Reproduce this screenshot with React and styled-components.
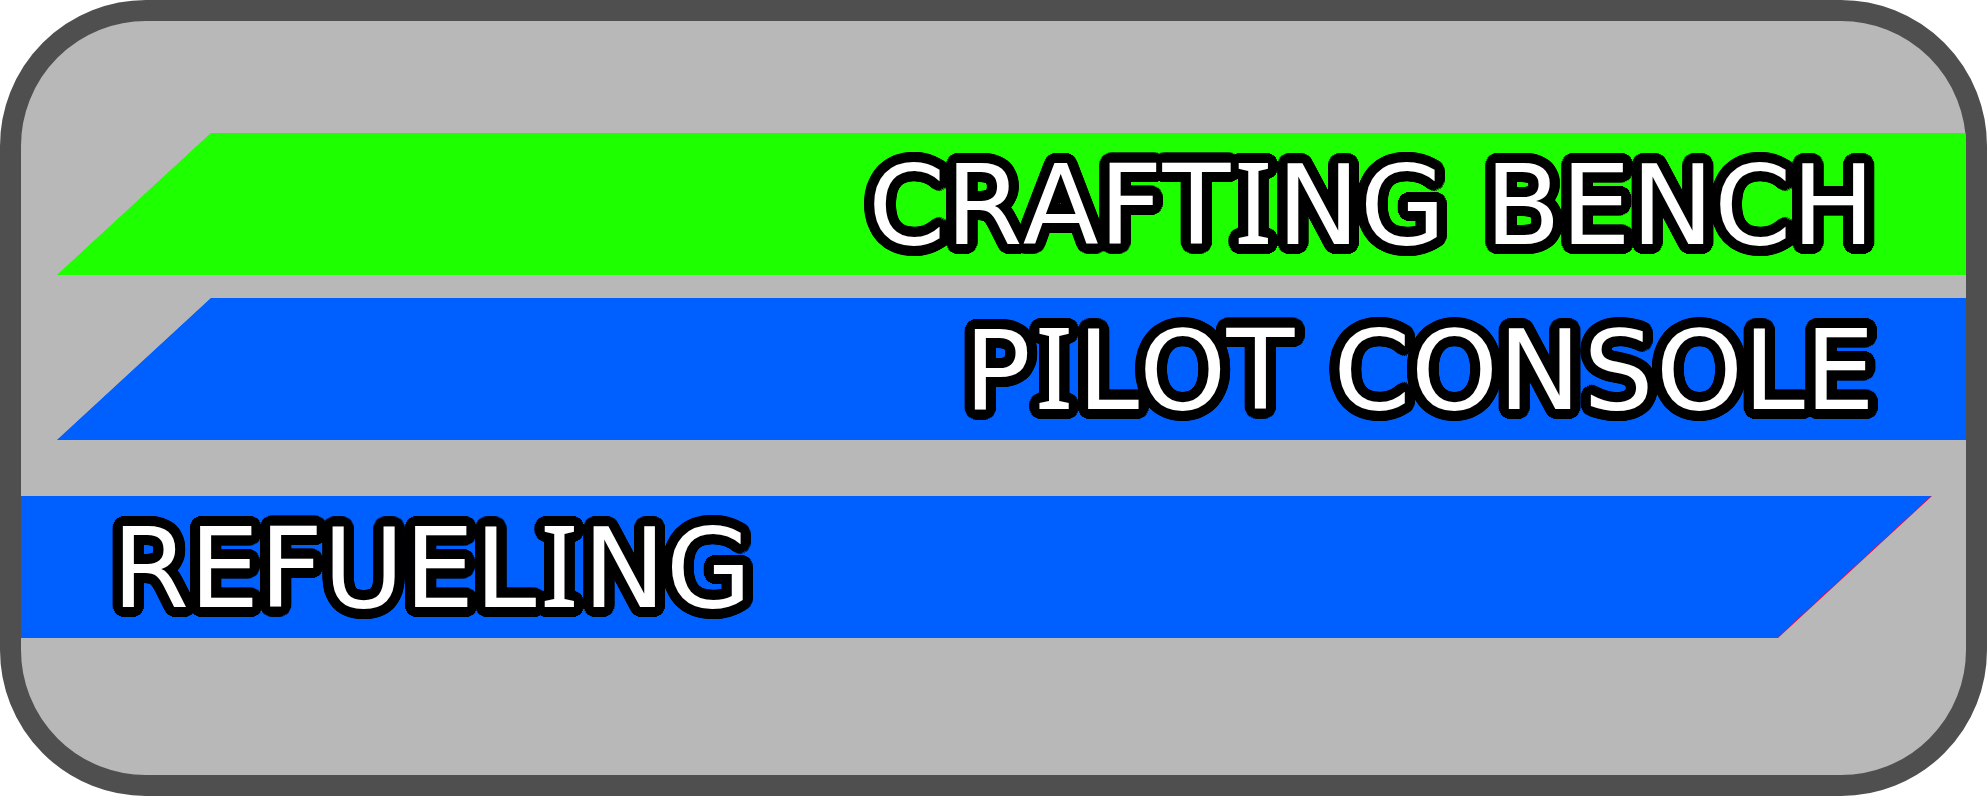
import React from 'react';
import styled, { createGlobalStyle } from 'styled-components';

const GlobalStyle = createGlobalStyle`
  * { box-sizing: border-box; }
  body { margin: 0; background: #fff; }
`;

const Panel = styled.main`
  display: flex;
  flex-direction: column;
  min-height: 100vh;
  padding: 112px 0;
  border: 21px solid #4f4f4f;
  border-radius: 146px;
  background: #b8b8b8;
  overflow: hidden;
`;

const slant = (side, inset) =>
  side === 'right'
    ? `polygon(${154 + inset}px 0, 100% 0, 100% 100%, ${inset}px 100%)`
    : `polygon(0 0, calc(100% - ${inset}px) 0, calc(100% - ${154 + inset}px) 100%, 0 100%)`;

const Banner = styled.section`
  position: relative;
  isolation: isolate;
  display: flex;
  justify-content: ${(p) => (p.$side === 'right' ? 'flex-end' : 'flex-start')};
  height: 142px;
  margin: ${(p) =>
    p.$side === 'right' ? `${p.$gap}px 0 0 36px` : `${p.$gap}px 34px 0 0`};
  padding: 2px 91px 0;
  background: ${(p) => p.$edge || p.$color};
  clip-path: ${(p) => slant(p.$side, 0)};

  &::before {
    content: '';
    position: absolute;
    inset: 0;
    z-index: -1;
    background: ${(p) => p.$color};
    clip-path: ${(p) => slant(p.$side, p.$edge ? 1 : 0)};
  }
`;

const Label = styled.h2`
  isolation: isolate;
  display: flex;
  gap: 39px;
  margin: 0;
  color: #fff;
  font: 400 111px/142px 'DejaVu Sans', sans-serif;
  font-kerning: none;
  white-space: nowrap;
`;

// One quadrant of the rounded outline, mirrored into the other three.
const quadrant = [
  [0, 10], [2, 10], [4, 9], [6, 8], [7, 7], [8, 6], [9, 4], [10, 2], [10, 0],
  [0, 6], [3, 5], [5, 3], [6, 0],
];
const outline = quadrant
  .flatMap(([x, y]) => [[x, y], [-x, y], [x, -y], [-x, -y]])
  .map(([x, y]) => `${x}px ${y}px 0 #000`)
  .join(', ');

// The outline sits on a layer below every letter, so it never cuts a neighbour.
const Run = styled.span`
  position: relative;

  &::before {
    content: attr(data-run);
    position: absolute;
    top: 0;
    left: 0;
    z-index: -1;
    padding: inherit;
    color: #000;
    line-height: normal;
    text-shadow: ${outline};
  }
`;

const SerifRun = styled(Run)`
  padding: 0 4px;
  font-family: 'Noto Sans', sans-serif;
  font-size: 113px;
  line-height: 0;
`;

const WideRun = styled(Run)`
  padding: 0 2px;
`;

const runTypes = { I: SerifRun, S: WideRun };

function Word({ children }) {
  return (
    <span>
      {children.split(/([IS])/).filter(Boolean).map((run, i) => {
        const Part = runTypes[run] || Run;
        return <Part key={i} data-run={run}>{run}</Part>;
      })}
    </span>
  );
}

const banners = [
  { text: 'CRAFTING BENCH', color: '#1eff00', side: 'right', gap: 0 },
  { text: 'PILOT CONSOLE', color: '#0060ff', side: 'right', gap: 23 },
  { text: 'REFUELING', color: '#0060ff', edge: '#ff0030', side: 'left', gap: 56 },
];

export default function App() {
  return (
    <>
      <GlobalStyle />
      <Panel>
        {banners.map((b) => (
          <Banner key={b.text} $side={b.side} $color={b.color} $edge={b.edge} $gap={b.gap}>
            <Label>
              {b.text.split(' ').map((word, i) => (
                <React.Fragment key={word}>
                  {i > 0 && ' '}
                  <Word>{word}</Word>
                </React.Fragment>
              ))}
            </Label>
          </Banner>
        ))}
      </Panel>
    </>
  );
}
